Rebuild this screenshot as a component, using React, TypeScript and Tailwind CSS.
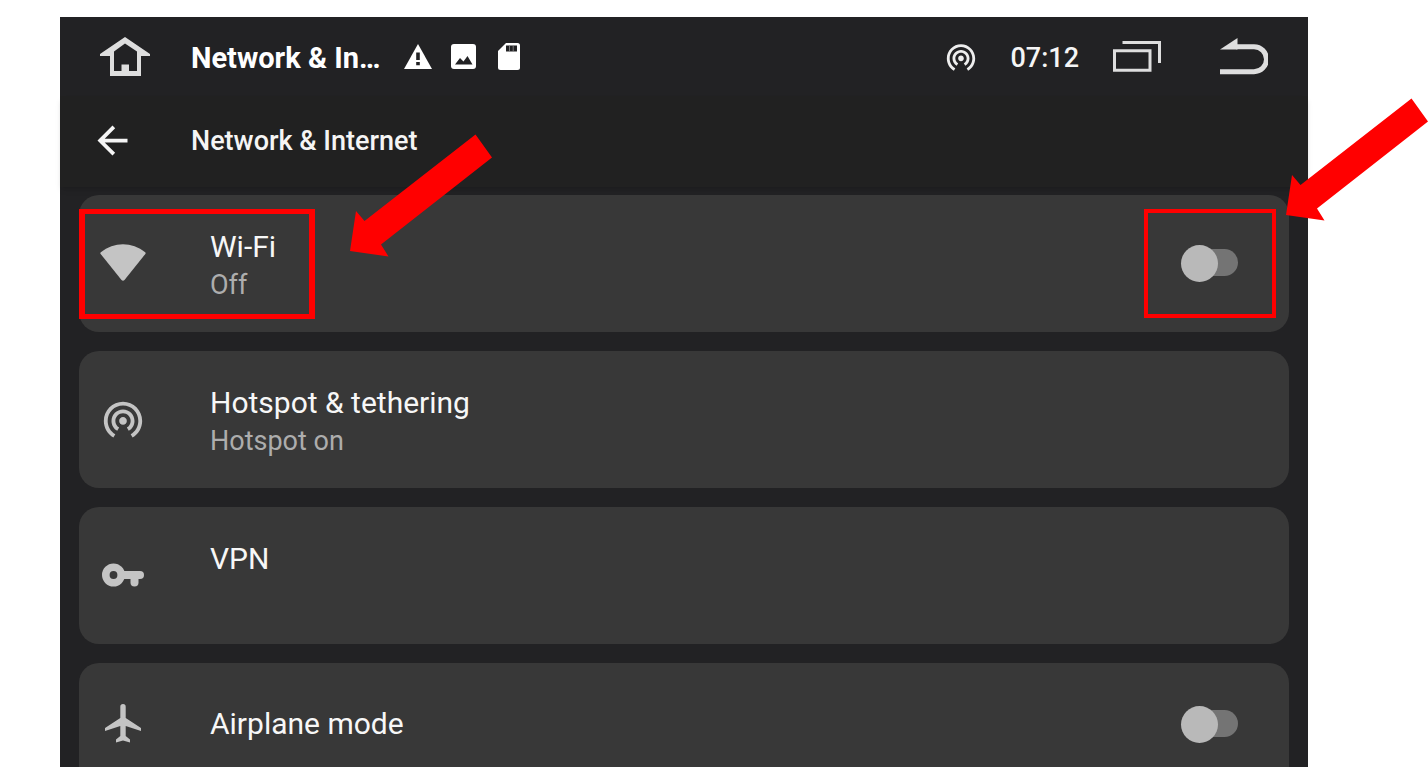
import clsx from "clsx";
import { useId, useState, type ReactNode } from "react";
import { MdArrowBack, MdWifiTethering } from "react-icons/md";

export default function App() {
  return (
    <div className="flex h-screen flex-col overflow-hidden bg-white pt-[17px] pr-[120px] pb-[13px] pl-[60px] font-[Roboto,sans-serif]">
      <div className="flex min-h-0 flex-1 flex-col bg-[#222224]">
        <StatusBar />
        <AppBar title="Network & Internet" />
        <main className="flex min-h-0 flex-1 flex-col gap-[19px] px-[19px] pt-2">
          <SettingCard className="relative h-[137px]">
            <ToggleRow icon={<WifiIcon />} title="Wi-Fi" summary="Off" />
            <WifiCallouts />
          </SettingCard>
          <SettingCard className="h-[137px]">
            <LinkRow
              icon={<MdWifiTethering className="size-[46px]" />}
              title="Hotspot & tethering"
              summary="Hotspot on"
            />
          </SettingCard>
          <SettingCard className="h-[137px]">
            <LinkRow icon={<KeyIcon />} title="VPN" summary="" />
          </SettingCard>
          <SettingCard className="min-h-0 flex-1 overflow-hidden rounded-b-none">
            <div className="h-[122px]">
              <ToggleRow icon={<AirplaneIcon />} title="Airplane mode" />
            </div>
          </SettingCard>
        </main>
      </div>
    </div>
  );
}

function StatusBar() {
  return (
    <div className="flex h-[79px] shrink-0 items-center px-10 text-[#dedede]">
      <button type="button" aria-label="Home">
        <HomeIcon />
      </button>
      <span className="ml-[41px] pt-0.5 text-[29px] leading-9 font-bold text-white">
        Network &amp; In…
      </span>
      <div className="ml-6 flex items-center gap-[19px] text-white">
        <WarningIcon />
        <PhotoIcon />
        <SdCardIcon />
      </div>
      <div className="ml-auto flex items-center">
        <MdWifiTethering className="size-[34px] text-[#eeeeee]" />
        <span className="ml-8 pt-0.5 text-[27px] leading-9 font-medium text-[#f5f5f5]">07:12</span>
        <button type="button" aria-label="Recent apps" className="ml-[34px]">
          <RecentsIcon />
        </button>
        <button type="button" aria-label="Back" className="ml-[59px]">
          <ReturnIcon />
        </button>
      </div>
    </div>
  );
}

function AppBar({ title }: { title: string }) {
  return (
    <header className="flex h-[91px] shrink-0 items-center bg-[#212121] pb-0.5 pl-[30px] text-[#f5f5f5] shadow-md">
      <button type="button" aria-label="Navigate up">
        <MdArrowBack className="size-[45px]" />
      </button>
      <h1 className="ml-14 text-[27px] leading-9 font-medium">{title}</h1>
    </header>
  );
}

function SettingCard({ className, children }: { className?: string; children: ReactNode }) {
  return (
    <section className={clsx("shrink-0 rounded-[20px] bg-[#383838]", className)}>
      {children}
    </section>
  );
}

interface RowProps {
  icon: ReactNode;
  title: string;
  summary?: string;
}

function RowContent({ icon, title, summary }: RowProps) {
  return (
    <>
      <span className="flex w-[88px] shrink-0 justify-center pb-0.5 text-[#c4c4c4]">{icon}</span>
      <span
        className={clsx("ml-[43px] flex flex-col text-left", summary !== undefined && "pt-1")}
      >
        <span className="text-[30px] leading-[38px] text-[#f7f7f7]">{title}</span>
        {summary !== undefined && (
          <span className="h-[38px] text-[27px] leading-[38px] text-[#adadad]">{summary}</span>
        )}
      </span>
    </>
  );
}

function LinkRow(props: RowProps) {
  return (
    <button type="button" className="flex size-full items-center">
      <RowContent {...props} />
    </button>
  );
}

function ToggleRow(props: RowProps) {
  const id = useId();
  const [checked, setChecked] = useState(false);

  return (
    <div className="flex size-full items-center pr-[51px]">
      <label htmlFor={id} className="flex flex-1 items-center self-stretch">
        <RowContent {...props} />
      </label>
      <input
        id={id}
        type="checkbox"
        role="switch"
        checked={checked}
        onChange={(event) => setChecked(event.target.checked)}
        className="relative h-[37px] w-[57px] appearance-none before:absolute before:top-1 before:right-0 before:h-[27px] before:w-12 before:rounded-full before:bg-[#747474] after:absolute after:top-0 after:left-0 after:size-[37px] after:rounded-full after:bg-[#b9b9b9] checked:after:left-5"
      />
    </div>
  );
}

function WifiCallouts() {
  return (
    <div className="pointer-events-none absolute inset-0">
      <div className="absolute top-[14px] left-0 h-[110px] w-[236px] border-x-6 border-y-5 border-[#ff0000]" />
      <div className="absolute top-[14px] right-[13px] h-[109px] w-[132px] border-4 border-[#ff0000]" />
      <CalloutArrow className="absolute -top-[61px] left-[271px]" />
      <CalloutArrow className="absolute -top-[97px] -right-[140px]" />
    </div>
  );
}

function CalloutArrow({ className }: { className?: string }) {
  return (
    <svg width="143" height="123" viewBox="0 0 143 123" className={className} fill="#ff0000">
      <path d="M0 117 6 77l8.500 10L125.500.500 142 23.500 31 110.500l7.500 12z" />
    </svg>
  );
}

function HomeIcon() {
  return (
    <svg width="50" height="40" viewBox="0 0 50 40" fill="currentColor" fillRule="evenodd">
      <path d="M25 0 50 17v2h-9v20H10V19H0v-2zM25 6.500 14 14.500V34h7.500v-6.500H29V34h8V14.500z" />
    </svg>
  );
}

function WarningIcon() {
  return (
    <svg width="28" height="25" viewBox="0 0 28 25">
      <path d="M14 0 28 25H0z" fill="currentColor" />
      <path d="M12.200 8.500h3.600V16h-3.600zM12.200 18h3.600v3.300h-3.600z" fill="#222224" />
    </svg>
  );
}

function PhotoIcon() {
  return (
    <svg width="25" height="25" viewBox="0 0 25 25">
      <rect width="25" height="25" rx="3" fill="currentColor" />
      <path d="M4 20.500 9 14l3.500 3.500L16.500 12l5 8.500z" fill="#222224" />
    </svg>
  );
}

function SdCardIcon() {
  return (
    <svg width="22" height="27" viewBox="0 0 22 27" className="ml-[3px]">
      <path
        d="M8 0h11.500A2.500 2.500 0 0 1 22 2.500v22a2.500 2.500 0 0 1-2.500 2.500h-17A2.500 2.500 0 0 1 0 24.500V8z"
        fill="currentColor"
      />
      <path d="M8 2.500h11V8.500H8z" fill="#222224" />
      <path d="M11.500 3v5M15.200 3v5" stroke="currentColor" strokeOpacity="0.5" strokeWidth="0.8" />
    </svg>
  );
}

function RecentsIcon() {
  return (
    <svg width="48" height="31" viewBox="0 0 48 31" fill="none" stroke="currentColor">
      <path d="M1.500 9.800h35.500v19.500H1.500z" strokeWidth="3" />
      <path d="M9.500 1.500h37V22" strokeWidth="3" />
    </svg>
  );
}

function ReturnIcon() {
  return (
    <svg width="48" height="37" viewBox="0 0 48 37" fill="none">
      <path d="M0 11.400 17.500 0v11.400z" fill="currentColor" />
      <path d="M16 8.700h18a12.500 12.500 0 0 1 0 25H0" stroke="currentColor" strokeWidth="5" />
    </svg>
  );
}

function WifiIcon() {
  return (
    <svg width="46" height="37" viewBox="0 0 46 37" fill="currentColor">
      <path d="M.800 8.200C14-2.500 32-2.500 45.200 8.200q.800.800.200 1.700L24.500 36q-1.500 1.500-3 0L.600 9.900Q0 9 .800 8.200z" />
    </svg>
  );
}

function KeyIcon() {
  return (
    <svg width="42" height="24" viewBox="0 0 42 24" fill="none" stroke="currentColor">
      <circle cx="11.500" cy="12" r="7.700" strokeWidth="7.600" />
      <path d="M21 12h17" strokeWidth="8" strokeLinecap="round" />
      <path d="M32.500 12v7.500" strokeWidth="8" strokeLinecap="round" />
    </svg>
  );
}

function AirplaneIcon() {
  return (
    <svg width="36" height="39" viewBox="0 0 36 39" fill="currentColor">
      <path d="M15.300 2.700a2.700 2.700 0 0 1 5.400 0V14L36 24v3l-15.300-5v10l4.300 3.500v3l-7-2-7 2v-3l4.300-3.500V22L0 27v-3l15.300-10z" />
    </svg>
  );
}
